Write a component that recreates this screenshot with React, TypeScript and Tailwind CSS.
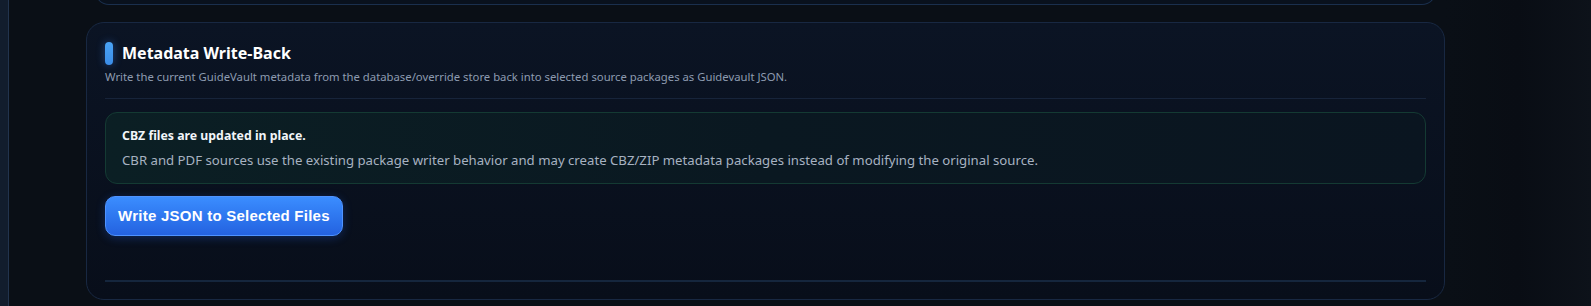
// Metadata write-back settings card

const sans = { fontFamily: '"Noto Sans", "Open Sans", sans-serif' }

function PreviousCardEdge() {
  // bottom edge of the card above, scrolled mostly out of view
  return (
    <div className="h-[5px] overflow-hidden mx-[9px] flex flex-col justify-end">
      <div className="h-[40px] flex-shrink-0 rounded-b-[14px] border-x border-b border-[#1a2f4d] bg-[#09111d]" />
    </div>
  )
}

function InfoBox() {
  return (
    <div className="mt-[13px] rounded-[12px] border border-[#143a33] bg-gradient-to-r from-[#0b1f24] via-[#0a1821] to-[#0a1520] px-[16px] pt-[15px] pb-[13px]">
      <div className="text-[12.3px] leading-[16px] font-bold text-[#f1f5f9]">CBZ files are updated in place.</div>
      <div className="mt-[6px] text-[13.2px] leading-[20px] text-[#a7b2c1]">
        CBR and PDF sources use the existing package writer behavior and may create CBZ/ZIP metadata packages instead of
        modifying the original source.
      </div>
    </div>
  )
}

export default function App() {
  return (
    <div className="w-[1591px] h-[306px] flex bg-[#0a0f16] overflow-hidden" style={sans}>
      <div className="w-[9px] flex-shrink-0 bg-[#121d2d] border-r border-[#22344e]" />

      <div className="w-[1359px] ml-[77px] flex-shrink-0 flex flex-col">
        <PreviousCardEdge />

        <section className="mt-[17px] rounded-[18px] border border-[#182842] bg-gradient-to-b from-[#0b1424] to-[#080e1a] px-[18px] pt-[18px] pb-[17px]">
          <div className="flex items-center gap-[9px] h-[24px]">
            <span className="w-[8px] h-[23px] rounded-full bg-gradient-to-b from-[#4aa3f5] to-[#3b8de8] shadow-[0_0_8px_rgba(59,130,246,0.45)]" />
            <h2 className="text-[16px] font-bold text-white">Metadata Write-Back</h2>
          </div>
          <p className="mt-[4px] text-[11.3px] leading-[16px] text-[#8d9bb0]">
            Write the current GuideVault metadata from the database/override store back into selected source packages as
            Guidevault JSON.
          </p>

          <div className="mt-[13px] h-px bg-[#17243a]" />

          <InfoBox />

          <button
            className="mt-[12px] h-[40px] px-[12px] rounded-[10px] border border-[#4f93ff] bg-gradient-to-b from-[#3b8dff] to-[#2462e0] text-white text-[15px] font-bold tracking-[0.25px] shadow-[0_2px_10px_rgba(37,99,235,0.3)]"
            style={{ fontFamily: '"Liberation Sans", Arial, sans-serif' }}
          >
            Write JSON to Selected Files
          </button>

          <div className="mt-[44px] h-[2px] bg-[#15263d]" />
        </section>
      </div>

      <div className="flex-1 bg-gradient-to-r from-[#0a0f16] via-[#090d14] to-[#0d121a]" />
    </div>
  )
}
